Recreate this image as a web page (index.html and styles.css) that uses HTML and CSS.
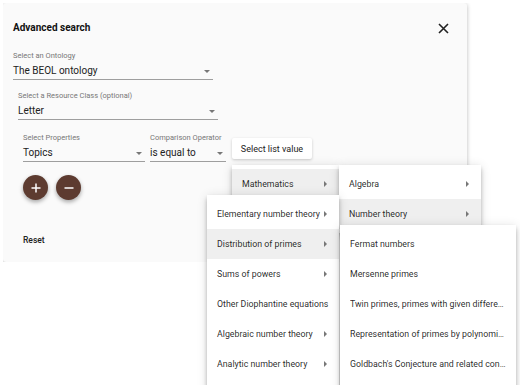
FILE: index.html
```html
<!DOCTYPE html>
<html lang="en">
<head>
  <meta charset="UTF-8">
  <meta name="viewport" content="width=device-width, initial-scale=1.0">
  <title>Advanced search</title>
  <link rel="stylesheet" href="styles.css">
</head>
<body>

  <div class="dialog">
    <div class="dialog-header">
      <h2 class="dialog-title">Advanced search</h2>
      <button class="close" aria-label="Close">
        <svg width="11" height="11" viewBox="0 0 11 11"><path d="M1 1L10 10M10 1L1 10" stroke="#222" stroke-width="1.6"/></svg>
      </button>
    </div>

    <div class="field field-ontology">
      <div class="field-label">Select an Ontology</div>
      <div class="field-value">The BEOL ontology<span class="arrow"></span></div>
    </div>

    <div class="field field-class">
      <div class="field-label">Select a Resource Class (optional)</div>
      <div class="field-value">Letter<span class="arrow"></span></div>
    </div>

    <div class="property-row">
      <div class="field field-prop">
        <div class="field-label">Select Properties</div>
        <div class="field-value">Topics<span class="arrow"></span></div>
      </div>
      <div class="field field-op">
        <div class="field-label">Comparison Operator</div>
        <div class="field-value">is equal to<span class="arrow"></span></div>
      </div>
      <button class="list-button">Select list value</button>
    </div>

    <div class="round-buttons">
      <button class="fab">
        <svg width="10" height="10" viewBox="0 0 10 10"><path d="M5 0.5V9.5M0.5 5H9.5" stroke="#fff" stroke-width="1.5"/></svg>
      </button>
      <button class="fab">
        <svg width="10" height="10" viewBox="0 0 10 10"><path d="M0.5 5H9.5" stroke="#fff" stroke-width="1.5"/></svg>
      </button>
    </div>

    <button class="reset">Reset</button>
  </div>

  <div class="menu menu-1">
    <div class="menu-item active">Mathematics<span class="caret"></span></div>
  </div>

  <div class="menu menu-2">
    <div class="menu-item">Algebra<span class="caret"></span></div>
    <div class="menu-item active">Number theory<span class="caret"></span></div>
  </div>

  <div class="menu menu-3">
    <div class="menu-item">Elementary number theory<span class="caret"></span></div>
    <div class="menu-item active">Distribution of primes<span class="caret"></span></div>
    <div class="menu-item">Sums of powers<span class="caret"></span></div>
    <div class="menu-item">Other Diophantine equations</div>
    <div class="menu-item">Algebraic number theory<span class="caret"></span></div>
    <div class="menu-item">Analytic number theory<span class="caret"></span></div>
  </div>

  <div class="menu menu-4">
    <div class="menu-item"><span class="label">Fermat numbers</span></div>
    <div class="menu-item"><span class="label">Mersenne primes</span></div>
    <div class="menu-item"><span class="label">Twin primes, primes with given difference</span></div>
    <div class="menu-item"><span class="label">Representation of primes by polynomials</span></div>
    <div class="menu-item"><span class="label">Goldbach's Conjecture and related conjectures</span></div>
  </div>

</body>
</html>
```

FILE: styles.css
```css
html, body {
  overflow: hidden;
}
body {
  margin: 3px;
  font-family: Roboto, "Liberation Sans", sans-serif;
  background: #fff;
  color: rgba(0, 0, 0, 0.87);
}
button {
  font-family: inherit;
  border: none;
  background: none;
  padding: 0;
  cursor: pointer;
}
.dialog {
  width: 444px;
  height: 241px;
  padding: 18px 10px 0;
  background: #fafafa;
  border-radius: 3px;
  box-shadow: 0 1px 4px rgba(0, 0, 0, 0.28);
}
.dialog-header {
  display: flex;
  align-items: center;
  justify-content: space-between;
  height: 14px;
  margin-bottom: 16px;
}
.dialog-title {
  margin: 0;
  font-size: 10px;
  font-weight: 700;
  line-height: 14px;
  color: #111;
}
.close {
  display: flex;
  margin-right: 8px;
}
.field {
  width: 200px;
  border-bottom: 1px solid #9e9e9e;
  padding-bottom: 1px;
}
.field-label {
  font-size: 7.5px;
  line-height: 10px;
  color: #777;
}
.field-value {
  display: flex;
  align-items: center;
  margin-top: 3px;
  font-size: 10px;
  line-height: 14px;
  color: #222;
}
.arrow {
  margin-left: auto;
  margin-right: 3px;
  width: 0;
  height: 0;
  border-left: 3px solid transparent;
  border-right: 3px solid transparent;
  border-top: 3px solid #777;
}
.field-class {
  margin: 11px 0 0 5px;
}
.property-row {
  display: flex;
  align-items: flex-start;
  margin: 13px 0 0 10px;
}
.field-prop {
  width: 122px;
}
.field-op {
  width: 76px;
  margin-left: 5px;
}
.list-button {
  margin: 5px 0 0 6px;
  width: 80px;
  height: 21px;
  background: #fff;
  border-radius: 2px;
  box-shadow: 0 1px 3px rgba(0, 0, 0, 0.2);
  font-size: 9px;
  color: #222;
}
.round-buttons {
  display: flex;
  gap: 8px;
  margin: 13px 0 0 10px;
}
.fab {
  width: 25px;
  height: 25px;
  border-radius: 50%;
  background: #5d3b30;
  box-shadow: 0 2px 4px rgba(0, 0, 0, 0.35);
  display: flex;
  align-items: center;
  justify-content: center;
}
.reset {
  display: block;
  margin: 34px 0 0 10px;
  font-size: 8.5px;
  font-weight: 500;
  line-height: 12px;
  color: #222;
}
.menu {
  position: absolute;
  background: #fff;
  padding: 4px 0;
  box-shadow: 0 2px 4px -1px rgba(0, 0, 0, 0.2), 0 4px 5px rgba(0, 0, 0, 0.14), 0 1px 10px rgba(0, 0, 0, 0.12);
}
.menu-item {
  display: flex;
  align-items: center;
  height: 30px;
  padding: 0 10px;
  font-size: 8.8px;
  white-space: nowrap;
  color: rgba(0, 0, 0, 0.85);
}
.menu-item.active {
  background: #efefef;
}
.caret {
  margin-left: auto;
  margin-right: 2px;
  width: 0;
  height: 0;
  border-top: 3px solid transparent;
  border-bottom: 3px solid transparent;
  border-left: 3px solid #777;
}
.label {
  overflow: hidden;
  text-overflow: ellipsis;
}
.menu-1 {
  left: 232px;
  top: 165px;
  width: 107px;
}
.menu-2 {
  left: 339px;
  top: 165px;
  width: 142px;
}
.menu-3 {
  left: 207px;
  top: 195px;
  width: 132px;
  padding-bottom: 20px;
}
.menu-4 {
  left: 340px;
  top: 225px;
  width: 176px;
  padding-bottom: 20px;
}
```
